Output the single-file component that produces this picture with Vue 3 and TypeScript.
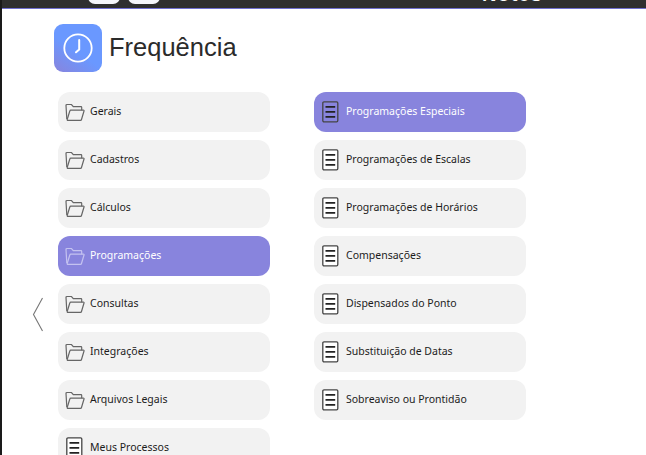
<script setup lang="ts">
const left = [
  { label: 'Gerais', icon: 'folder' },
  { label: 'Cadastros', icon: 'folder' },
  { label: 'Cálculos', icon: 'folder' },
  { label: 'Programações', icon: 'folder', active: true },
  { label: 'Consultas', icon: 'folder' },
  { label: 'Integrações', icon: 'folder' },
  { label: 'Arquivos Legais', icon: 'folder' },
  { label: 'Meus Processos', icon: 'doc' },
]
const right = [
  { label: 'Programações Especiais', icon: 'doc', active: true },
  { label: 'Programações de Escalas', icon: 'doc' },
  { label: 'Programações de Horários', icon: 'doc' },
  { label: 'Compensações', icon: 'doc' },
  { label: 'Dispensados do Ponto', icon: 'doc' },
  { label: 'Substituição de Datas', icon: 'doc' },
  { label: 'Sobreaviso ou Prontidão', icon: 'doc' },
]
const columns = [left, right]
</script>

<template>
  <div class="page">
    <header class="topbar">
      <div class="pills">
        <span class="pill"></span>
        <span class="pill"></span>
      </div>
      <span class="brand">Notes</span>
    </header>
    <div class="body">
      <div class="rail">
        <svg class="chev" width="12" height="36" viewBox="0 0 12 36">
          <path d="M10.500 1 L1.500 17.500 L10.500 34" fill="none" stroke="#777" stroke-width="1.100" />
        </svg>
      </div>
      <main class="main">
        <div class="title">
          <div class="logo">
            <svg width="32" height="32" viewBox="0 0 32 32">
              <circle cx="16" cy="16" r="13.700" fill="none" stroke="#fff" stroke-width="1.800" />
              <path d="M17.200 8 V17.500 L14 20.300" fill="none" stroke="#fff" stroke-width="2" stroke-linecap="round" stroke-linejoin="round" />
            </svg>
          </div>
          <h1>Frequência</h1>
        </div>
        <div class="cols">
          <div v-for="(col, i) in columns" :key="i" class="col">
            <div v-for="item in col" :key="item.label" class="row" :class="{ active: item.active }">
              <svg v-if="item.icon === 'folder'" class="ico" width="20" height="20" viewBox="0 0 20 20">
                <path class="f" d="M1.800 17 L1 3.500 Q1 2.500 2 2.500 H6.500 L8.300 4.700 H16 Q16.700 4.700 16.700 5.500 V8.200" />
                <path class="f" d="M2 18.300 H15.500 Q16.300 18.300 16.500 17.500 L19 9 Q19.200 8.200 18.400 8.200 H5.800 Q5 8.200 4.800 9 L2.200 17.500 Q2 18.300 2 18.300" />
              </svg>
              <svg v-else class="ico" width="20" height="24" viewBox="0 0 20 24">
                <rect class="d" x="1.800" y="1.800" width="15" height="20" rx="1.200" />
                <path class="l" d="M4.500 6.800 H14.200 M4.500 11.800 H14.200 M4.500 16.800 H14.200" />
              </svg>
              <span class="txt">{{ item.label }}</span>
            </div>
          </div>
        </div>
      </main>
    </div>
  </div>
</template>

<style>
html, body { margin: 0; overflow: hidden; background: #fff; }
</style>

<style scoped>
.page {
  width: 646px;
  height: 455px;
  overflow: hidden;
  box-sizing: border-box;
  border-left: 2px solid #1a1a1a;
  display: flex;
  flex-direction: column;
}
.topbar {
  height: 8px;
  flex: none;
  background: #2f2f2f;
  border-bottom: 1px solid #6f6fd0;
  display: flex;
  overflow: hidden;
}
.pills {
  display: flex;
  gap: 8px;
  margin-left: 86px;
  margin-top: -12px;
}
.pill {
  width: 32px;
  height: 16px;
  border-radius: 7px;
  background: #f5f6fb;
}
.brand {
  margin-left: 322px;
  margin-top: -16px;
  font: 700 20px/20px "Liberation Sans", sans-serif;
  color: #fff;
  letter-spacing: 1px;
}
.body {
  flex: 1;
  display: flex;
  min-height: 0;
}
.rail {
  width: 30px;
  flex: none;
  padding-top: 288px;
  box-sizing: border-box;
  display: flex;
  justify-content: flex-end;
  align-items: flex-start;
}
.chev {
  margin-right: -12px;
}
.main {
  margin-left: 22px;
  padding-top: 15px;
}
.title {
  display: flex;
  align-items: center;
  gap: 7px;
  margin-bottom: 20px;
}
.logo {
  width: 48px;
  height: 48px;
  border-radius: 9px;
  background: linear-gradient(215deg, #6a98ff 55%, #8884dd 100%);
  display: flex;
  align-items: center;
  justify-content: center;
}
h1 {
  margin: 0;
  font: 400 25.500px/1 "Liberation Sans", sans-serif;
  color: #2b2b2b;
}
.cols {
  display: flex;
  gap: 44px;
  margin-left: 4px;
}
.col {
  display: flex;
  flex-direction: column;
  gap: 8px;
  width: 212px;
}
.row {
  height: 40px;
  flex: none;
  border-radius: 12px;
  background: #f2f2f2;
  display: flex;
  align-items: center;
  gap: 5px;
  padding-left: 7px;
  font: 400 10.500px "Noto Sans", sans-serif;
  color: #1c1c1c;
}
.txt { margin-top: -3px; }
.row.active {
  background: #8884dd;
  color: #fff;
}
.ico { flex: none; }
.f { fill: none; stroke: #666; stroke-width: 1.200; }
.active .f { stroke: #c4c2f0; }
.d { fill: #fff; stroke: #444; stroke-width: 1.300; }
.l { stroke: #222; stroke-width: 1.700; fill: none; }
.active .d { fill: #8884dd; }
</style>
